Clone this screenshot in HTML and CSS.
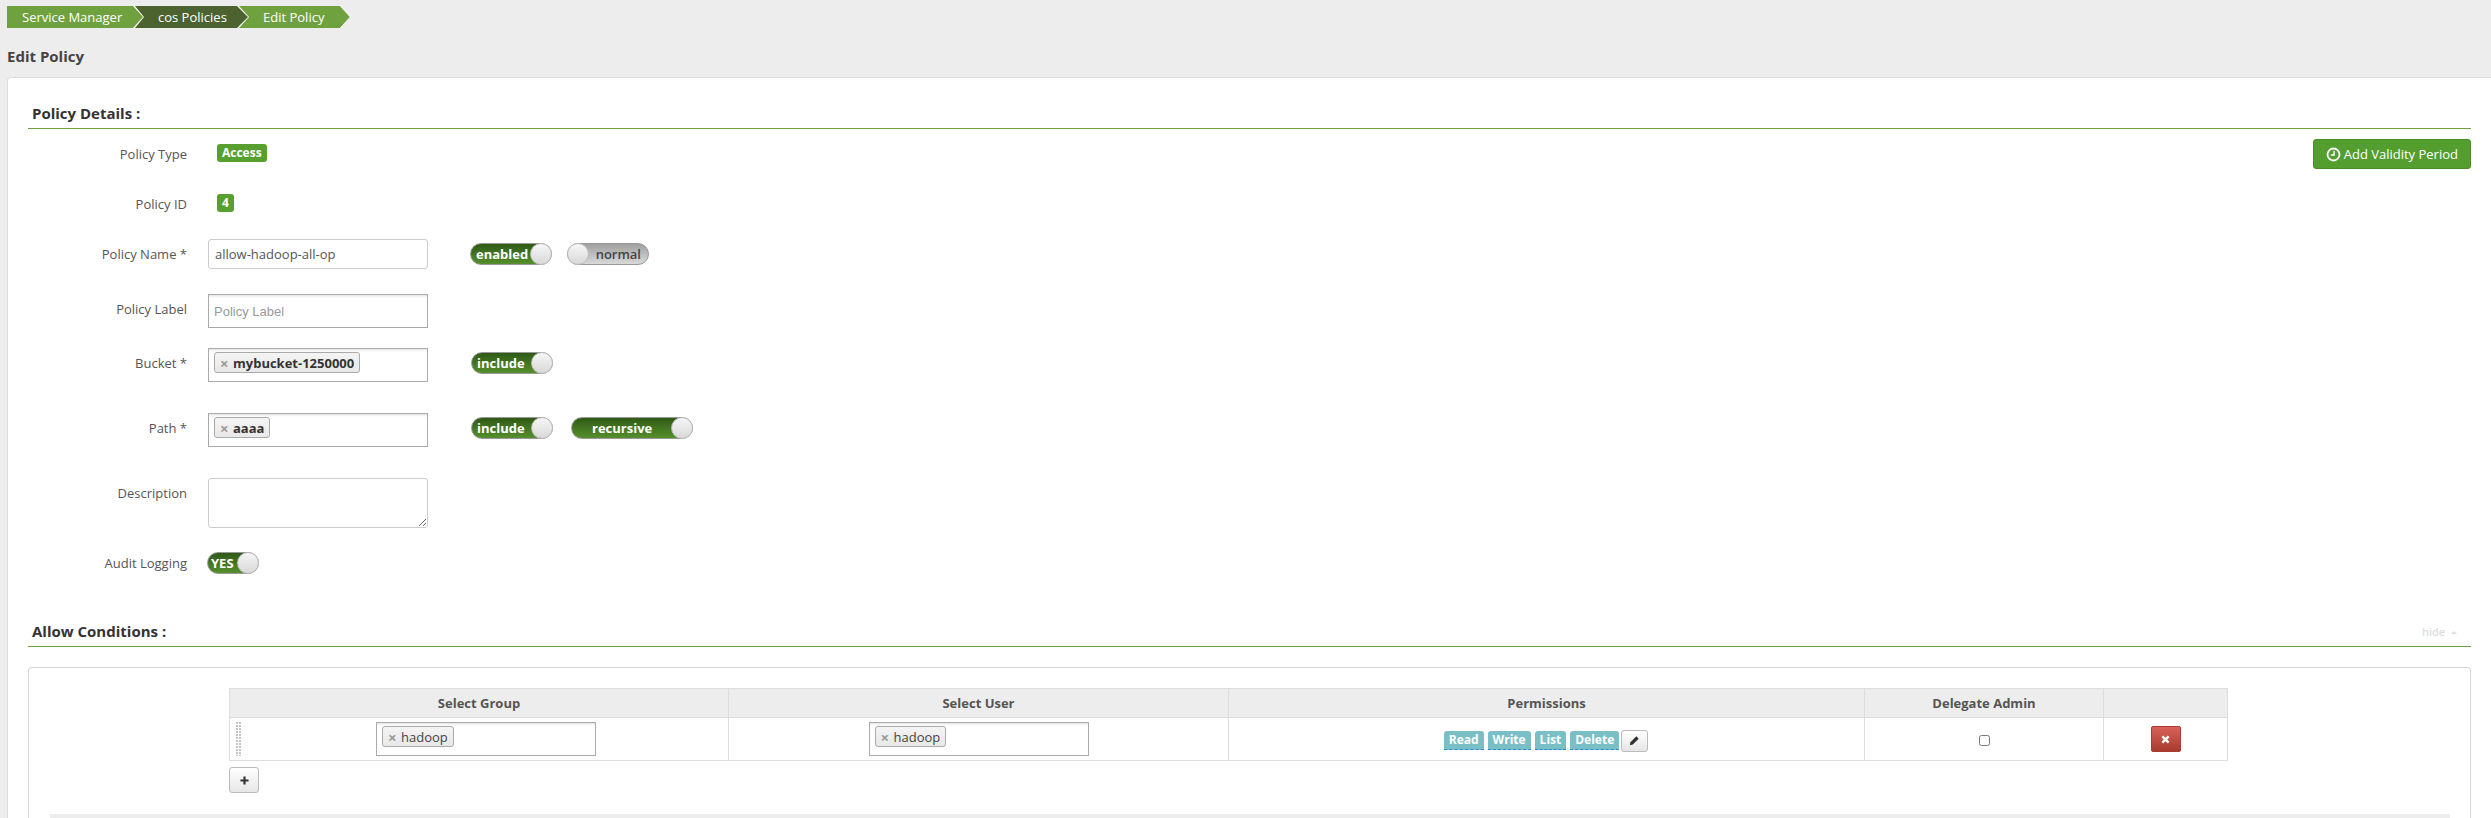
FILE: index.html
```html
<!DOCTYPE html>
<html>
  <head>
    <title>Edit Policy</title>
    <link rel="stylesheet" href="styles.css">
  </head>
<body>
  <div class="crumbs">
    <a class="crumb crumb-first">Service Manager</a>
    <a class="crumb crumb-mid">cos Policies</a>
    <a class="crumb crumb-last">Edit Policy</a>
  </div>

  <h1 class="page-title">Edit Policy</h1>

  <div class="card">
    <div class="section-title">Policy Details :</div>

    <div class="row row-type">
      <label class="row-label">Policy Type</label>
      <span class="badge">Access</span>
      <button class="add-validity">
        <svg class="clock" viewBox="0 0 16 16" width="15" height="15">
          <circle cx="8" cy="8" r="6.4" fill="none" stroke="#fff" stroke-width="1.9"/>
          <path d="M8.6 4v4.6H5.2" fill="none" stroke="#fff" stroke-width="1.5"/>
        </svg>
        Add Validity Period
      </button>
    </div>

    <div class="row row-id">
      <label class="row-label">Policy ID</label>
      <span class="badge">4</span>
    </div>

    <div class="row row-name">
      <label class="row-label">Policy Name *</label>
      <input class="text-input" type="text" value="allow-hadoop-all-op">
      <div class="toggles">
        <div class="toggle"><span class="toggle-text">enabled</span><span class="knob"></span></div>
        <div class="toggle toggle-off"><span class="knob"></span><span class="toggle-text">normal</span></div>
      </div>
    </div>

    <div class="row row-policy-label">
      <label class="row-label">Policy Label</label>
      <input class="text-input square-input" type="text" placeholder="Policy Label">
    </div>

    <div class="row row-bucket">
      <label class="row-label">Bucket *</label>
      <div class="tag-input">
        <span class="tag tag-bold"><span class="tag-x">×</span>mybucket-1250000</span>
      </div>
      <div class="toggles toggles-tag">
        <div class="toggle"><span class="toggle-text">include</span><span class="knob"></span></div>
      </div>
    </div>

    <div class="row row-path">
      <label class="row-label">Path *</label>
      <div class="tag-input">
        <span class="tag tag-bold"><span class="tag-x">×</span>aaaa</span>
      </div>
      <div class="toggles toggles-tag">
        <div class="toggle"><span class="toggle-text">include</span><span class="knob"></span></div>
        <div class="toggle toggle-wide"><span class="toggle-text">recursive</span><span class="knob"></span></div>
      </div>
    </div>

    <div class="row row-desc">
      <label class="row-label">Description</label>
      <textarea class="desc-input"></textarea>
    </div>

    <div class="row row-audit">
      <label class="row-label">Audit Logging</label>
      <div class="toggle toggle-small"><span class="toggle-text">YES</span><span class="knob"></span></div>
    </div>

    <div class="section-title section-allow">
      Allow Conditions :
      <span class="hide-link">hide <span class="caret-up"></span></span>
    </div>

    <div class="box">
      <table class="cond-table">
        <colgroup>
          <col class="col-group">
          <col class="col-user">
          <col class="col-perm">
          <col class="col-admin">
          <col class="col-del">
        </colgroup>
        <tr>
          <th>Select Group</th>
          <th>Select User</th>
          <th>Permissions</th>
          <th>Delegate Admin</th>
          <th></th>
        </tr>
        <tr>
          <td>
            <div class="group-cell">
              <span class="drag"></span>
              <div class="tag-input"><span class="tag"><span class="tag-x">×</span>hadoop</span></div>
            </div>
          </td>
          <td>
            <div class="user-cell">
              <div class="tag-input"><span class="tag"><span class="tag-x">×</span>hadoop</span></div>
            </div>
          </td>
          <td>
            <div class="perm-cell">
              <span class="perm">Read</span>
              <span class="perm">Write</span>
              <span class="perm">List</span>
              <span class="perm">Delete</span>
              <button class="edit-btn">
                <svg viewBox="0 0 12 12" width="11" height="11">
                  <path d="M8 1.4l2.6 2.6-6.4 6.4-3.3.7.7-3.3z" fill="#333"/>
                </svg>
              </button>
            </div>
          </td>
          <td class="admin-cell"><input type="checkbox" class="admin-check"></td>
          <td class="del-cell">
            <button class="del-btn">
              <svg viewBox="0 0 10 10" width="9" height="9">
                <path d="M1.5 1.5l7 7M8.5 1.5l-7 7" stroke="#fff" stroke-width="2.6" fill="none"/>
              </svg>
            </button>
          </td>
        </tr>
      </table>

      <button class="plus-btn">
        <svg viewBox="0 0 10 10" width="9" height="9">
          <path d="M5 .5v9M.5 5h9" stroke="#333" stroke-width="2.4" fill="none"/>
        </svg>
      </button>

      <div class="bar"></div>
    </div>
  </div>
</body>
</html>
```

FILE: styles.css
```css
html, body{
  height: 818px;
  overflow: hidden;
}
body{
  margin: 0;
  background-color: #ededed;
  color: #555;
  font-family: "Open Sans", sans-serif;
  font-size: 13px;
}

/* breadcrumb */
.crumbs{
  display: flex;
  width: 343px;
  height: 22px;
  margin: 6px 0 0 7px;
  background-color: #fff;
  border-radius: 3px 0 0 3px;
  clip-path: polygon(0 0, 333px 0, 100% 50%, 333px 100%, 0 100%);
}
.crumb{
  display: block;
  height: 22px;
  line-height: 22px;
  color: #fff;
  font-size: 13px;
  background-color: #6fa23e;
}
.crumb-first{
  width: 136px;
  padding-left: 15px;
  box-sizing: border-box;
  clip-path: polygon(0 0, 126px 0, 100% 50%, 126px 100%, 0 100%);
}
.crumb-mid{
  width: 113px;
  margin-left: -8px;
  padding-left: 23px;
  box-sizing: border-box;
  background-color: #4c632f;
  clip-path: polygon(0 0, 102px 0, 100% 50%, 102px 100%, 0 100%, 9px 50%);
}
.crumb-last{
  width: 111px;
  margin-left: -9px;
  padding-left: 24px;
  box-sizing: border-box;
  clip-path: polygon(0 0, 101px 0, 100% 50%, 101px 100%, 0 100%, 10px 50%);
}

.page-title{
  height: 20px;
  line-height: 20px;
  margin: 18px 0 11px 7px;
  font-size: 15px;
  font-weight: bold;
  color: #444;
}

/* main card */
.card{
  box-sizing: border-box;
  height: 741px;
  margin-left: 7px;
  padding: 21px 20px 0 20px;
  background-color: #fff;
  border-top: 1px solid #ddd;
  border-left: 1px solid #ddd;
  border-radius: 4px 0 0 0;
}
.section-title{
  display: flex;
  justify-content: space-between;
  align-items: center;
  height: 27px;
  padding: 0 4px 2px;
  border-bottom: 1px solid #6fa23e;
  font-size: 15px;
  font-weight: bold;
  color: #333;
}
.section-allow{
  margin-top: 43px;
}
.hide-link{
  margin-right: 10px;
  margin-top: 2px;
  font-size: 11px;
  font-weight: 600;
  color: #ddd;
}
.caret-up{
  display: inline-block;
  margin-left: 3px;
  vertical-align: 2px;
  border-left: 3px solid transparent;
  border-right: 3px solid transparent;
  border-bottom: 3px solid #ddd;
}

/* form rows */
.row{
  display: flex;
  align-items: center;
}
.row-label{
  width: 159px;
  margin-right: 21px;
  flex: none;
  text-align: right;
  color: #555;
}
.row-type{ height: 30px; margin-top: 10px; }
.row-id{ height: 30px; margin-top: 20px; }
.row-name{ height: 30px; margin-top: 20px; }
.row-policy-label{ height: 34px; margin-top: 25px; }
.row-bucket{ height: 34px; margin-top: 20px; }
.row-path{ height: 34px; margin-top: 31px; }
.row-desc{ height: 50px; margin-top: 31px; align-items: flex-start; }
.row-audit{ height: 22px; margin-top: 24px; }
.row-desc .row-label{
  margin-top: 6px;
}
.row-policy-label .row-label,
.row-bucket .row-label,
.row-path .row-label{
  margin-bottom: 4px;
}

.badge{
  display: inline-block;
  height: 18px;
  line-height: 17px;
  margin-left: 9px;
  margin-bottom: 2px;
  padding: 0 5px;
  background-color: #57a030;
  border-radius: 3px;
  color: #fff;
  font-size: 12px;
  font-weight: bold;
}

.add-validity{
  display: flex;
  align-items: center;
  gap: 3px;
  height: 30px;
  margin-left: auto;
  padding: 0 12px;
  background-color: #549e30;
  border: 1px solid #4a8c2a;
  border-radius: 3px;
  color: #fff;
  font-family: "Open Sans", sans-serif;
  font-size: 13px;
}

.text-input{
  width: 220px;
  height: 30px;
  box-sizing: border-box;
  padding: 0 6px;
  border: 1px solid #ccc;
  border-radius: 3px;
  color: #555;
  font-family: "Open Sans", sans-serif;
  font-size: 13px;
}
.square-input{
  height: 34px;
  padding: 0 5px;
  border: 1px solid #aaa;
  border-radius: 0;
  font-family: "Liberation Sans", sans-serif;
  box-shadow: inset 0 3px 3px -2px #ddd;
}
.square-input::placeholder{
  color: #999;
}
.desc-input{
  display: block;
  width: 220px;
  height: 50px;
  box-sizing: border-box;
  margin: 0;
  border: 1px solid #ccc;
  border-radius: 3px;
}

.tag-input{
  display: flex;
  align-items: flex-start;
  width: 220px;
  height: 34px;
  box-sizing: border-box;
  padding: 3px 5px;
  background-color: #fff;
  border: 1px solid #aaa;
  box-shadow: inset 0 3px 3px -2px #ddd;
}
.tag{
  display: flex;
  align-items: center;
  height: 21px;
  box-sizing: border-box;
  padding: 0 5px;
  background: linear-gradient(#f4f4f4, #e8e8e8);
  border: 1px solid #aaa;
  border-radius: 3px;
  color: #444;
  font-size: 13px;
}
.tag-bold{
  font-weight: bold;
  color: #333;
}
.tag-x{
  width: 13px;
  flex: none;
  color: #999;
  font-weight: bold;
  font-size: 15px;
}

/* toggles */
.toggles{
  display: flex;
  gap: 15px;
  margin-left: 42px;
}
.toggles-tag{
  gap: 18px;
  margin-left: 43px;
  margin-bottom: 4px;
}
.toggle{
  display: flex;
  justify-content: space-between;
  align-items: center;
  width: 82px;
  height: 22px;
  box-sizing: border-box;
  padding-left: 5px;
  background: linear-gradient(#2f5a16, #568f2c);
  border: 1px solid #999;
  border-radius: 11px;
  color: #fff;
  font-size: 13px;
  font-weight: bold;
}
.toggle-off{
  padding: 0 7px 0 0;
  background: linear-gradient(#a0a0a0, #d8d8d8);
  color: #444;
  font-weight: 600;
}
.toggle-wide{
  width: 122px;
}
.toggle-wide .toggle-text{
  margin-left: 15px;
}
.toggle-small{
  width: 52px;
  margin-left: -1px;
  padding-left: 3px;
}
.knob{
  width: 22px;
  height: 22px;
  flex: none;
  margin: -1px;
  background: linear-gradient(#f6f6f6, #d8d8d8);
  border: 1px solid #bbb;
  box-sizing: border-box;
  border-radius: 50%;
}

/* allow conditions */
.box{
  box-sizing: border-box;
  height: 151px;
  margin-top: 20px;
  padding: 20px 20px 0 21px;
  border: 1px solid #d5d5d5;
  border-bottom: none;
  border-radius: 4px 4px 0 0;
}
.cond-table{
  width: 1998px;
  margin-left: 179px;
  border-collapse: collapse;
  table-layout: fixed;
}
.col-group{ width: 499px; }
.col-user{ width: 500px; }
.col-perm{ width: 636px; }
.col-admin{ width: 239px; }
.col-del{ width: 124px; }
.cond-table th{
  height: 28px;
  padding: 0;
  background-color: #ededed;
  border: 1px solid #ddd;
  font-size: 13px;
  color: #555;
}
.cond-table td{
  height: 42px;
  padding: 0;
  border: 1px solid #ddd;
}
.group-cell{
  display: flex;
  align-items: center;
  padding-left: 6px;
}
.drag{
  width: 6px;
  height: 34px;
  margin-right: 134px;
  background-color: #c4c4c4;
  background-image: linear-gradient(90deg, transparent 2px, #fff 2px), linear-gradient(transparent 2px, #fff 2px);
  background-size: 3px 3px;
}
.user-cell{
  display: flex;
  justify-content: center;
}
.perm-cell{
  display: flex;
  justify-content: center;
  align-items: center;
  gap: 4px;
  padding: 3px 1px 0 0;
}
.perm{
  height: 18px;
  line-height: 18px;
  padding: 0 5px;
  background-color: #7abfc6;
  border-bottom: 1px dashed #2d8ccf;
  border-radius: 3px 3px 0 0;
  color: #fff;
  font-size: 12px;
  font-weight: bold;
}
.edit-btn{
  display: flex;
  justify-content: center;
  align-items: center;
  width: 27px;
  height: 22px;
  margin-left: -2px;
  padding: 0;
  background: linear-gradient(#fff, #e6e6e6);
  border: 1px solid #bbb;
  border-radius: 3px;
}
.admin-cell, .del-cell{
  text-align: center;
}
.admin-check{
  width: 11px;
  height: 11px;
  margin: 0;
  vertical-align: middle;
}
.del-btn{
  display: inline-flex;
  justify-content: center;
  align-items: center;
  width: 30px;
  height: 26px;
  padding: 0;
  vertical-align: middle;
  background: linear-gradient(#d9625a, #a83a2f);
  border: 1px solid #a83a2f;
  border-radius: 2px;
}
.plus-btn{
  display: flex;
  justify-content: center;
  align-items: center;
  width: 30px;
  height: 26px;
  margin: 6px 0 0 179px;
  padding: 0;
  background: linear-gradient(#fff, #e6e6e6);
  border: 1px solid #bbb;
  border-radius: 3px;
}
.bar{
  height: 5px;
  margin-top: 21px;
  background-color: #ededed;
}
```
